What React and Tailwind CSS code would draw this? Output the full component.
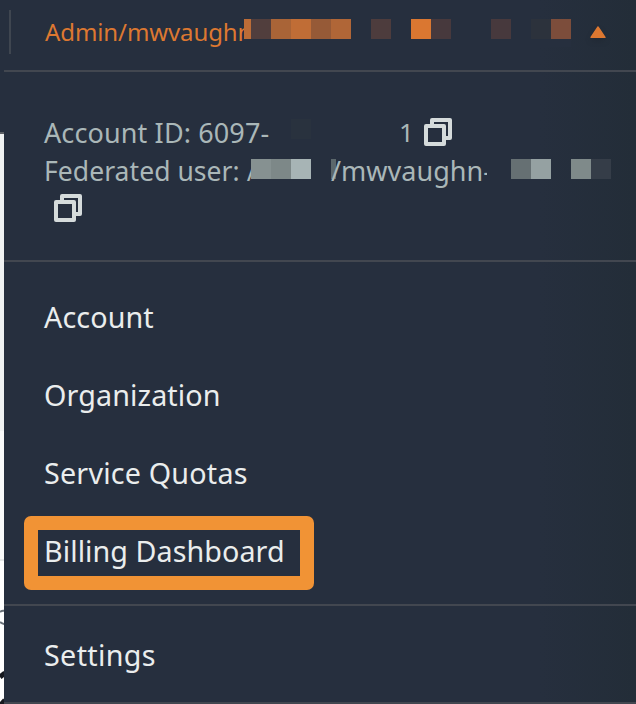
const headerBlocks = [
  [7, '#bc6c37'], [20, '#513e3d'], [20, '#a96437'], [20, '#c06d36'], [20, '#965a37'], [20, '#b06637'],
  [20, null], [20, '#4d3c3d'], [20, null], [20, '#da7731'], [20, '#47393d'], [40, null],
  [20, '#47393d'], [20, null], [20, '#2c323c'], [20, '#7c4d3b'],
];
const nameBlocks = [[20, '#869191'], [20, '#7d8888'], [20, '#a7b4b5'], [20, null], [5, '#5b676b']];
const tailBlocks = [[24, '#262f3e'], [20, '#667073'], [20, '#95a1a2'], [20, null], [20, '#7f8a8a'], [20, '#353d48']];

function Blocks({ items }) {
  return (
    <span className="flex h-5 shrink-0">
      {items.map(([width, color], i) => (
        <span key={i} className="h-5 shrink-0" style={{ width, backgroundColor: color || 'transparent' }} />
      ))}
    </span>
  );
}

function CopyIcon() {
  return (
    <svg className="size-7 shrink-0" viewBox="0 0 28 28" fill="none" stroke="#d5dbdb" strokeWidth="4" strokeLinejoin="round">
      <path d="M2 8h18v18H2z" />
      <path d="M8 8V2h18v18h-6" />
    </svg>
  );
}

const itemText = 'text-[28.7px] leading-[38px] whitespace-nowrap text-[#eaeded]';

export default function App() {
  return (
    <div className="flex h-[704px] w-[636px] flex-col overflow-hidden bg-[linear-gradient(to_right,#262f3e_540px,#232d38_636px)] font-['Noto_Sans',sans-serif]">
      <header className="flex h-[70px] shrink-0">
        <div className="mt-[10px] ml-[9px] h-11 w-0.5 bg-[#3f4650]" />
        <div className="mt-[13px] ml-[34px] w-[199px] text-[24px] leading-[38px] whitespace-nowrap text-[#dd7831]">
          <span className="tracking-[-0.1px]">Admin/mwvaughn</span>
        </div>
        <div className="mt-[19px] h-7 bg-[#262f3e]"><Blocks items={headerBlocks} /></div>
        <svg className="mt-[25px] ml-[19px] h-[14px] w-4 drop-shadow-md" viewBox="0 0 16 14">
          <path d="M8 2 15 12.3H1z" fill="#dd7831" stroke="#dd7831" strokeWidth="1.4" strokeLinejoin="round" />
        </svg>
      </header>
      <div className="flex min-h-0 grow">
        <aside className="relative h-full w-1 shrink-0 overflow-hidden">
          <div className="h-[62px]" />
          <div className="h-0.5 bg-[#5b5f64]" />
          <div className="h-[297px] bg-[#f0f2f2]" />
          <div className="h-[130px] border-b-2 border-[#e5e8e8] bg-[#f9fafa]" />
          <div className="h-[143px] bg-white" />
          <svg className="absolute top-[530px] left-0 h-[104px] w-1" viewBox="0 0 4 104" fill="none">
            <path d="M0 13Q2 11 5 12M0 23Q2 25 5 25" transform="translate(0 -1)" stroke="#687078" strokeWidth="2" />
            <path d="M0 77 5 73M0 106 5 100" stroke="#16191f" strokeWidth="5" />
          </svg>
        </aside>
        <main className="flex min-w-0 grow flex-col border-t-2 border-[#424750]">
          <section className="flex h-[190px] shrink-0 flex-col border-b-2 border-[#424750] pt-[42px] pl-10 text-[26px] leading-[38px] whitespace-nowrap text-[#aab7b8]">
            <div className="flex h-[38px]">
              <span className="w-[247px] text-[27px] tracking-[0.12px]">Account ID: 6097-</span>
              <span className="mt-[5px] size-5 bg-[#29323e]" />
              <span className="-mt-px ml-[88px] w-[25px]">1</span>
              <span className="mt-1"><CopyIcon /></span>
            </div>
            <div className="flex h-[38px]">
              <span className="w-[207px] text-[26.5px] tracking-[0.05px]">Federated user: /</span>
              <span className="mt-[7px]"><Blocks items={nameBlocks} /></span>
              <span className="-ml-[5px] w-[156px] text-[27px] tracking-[0.02px]">/mwvaughn-</span>
              <span className="mt-[7px]"><Blocks items={tailBlocks} /></span>
            </div>
            <div className="mt-1 ml-2.5"><CopyIcon /></div>
          </section>
          <nav className="flex h-[344px] shrink-0 flex-col border-b-2 border-[#424750] pt-9 pl-10">
            <div className={itemText}><span className="tracking-[0.1px]">Account</span></div>
            <div className={itemText + ' mt-10'}><span className="tracking-[0.12px]">Organization</span></div>
            <div className={itemText + ' mt-10'}><span className="tracking-[0.2px]">Service Quotas</span></div>
            <div className="mt-[24px] -ml-5 h-[74px] w-[290px] shrink-0 rounded-[7px] bg-[#f19335] p-[14px]">
              <div className="h-[46px] bg-[#262f3e] pt-0.5 pl-1.5">
                <div className={itemText}><span className="tracking-[0.06px]">Billing Dashboard</span></div>
              </div>
            </div>
          </nav>
          <div className="h-24 shrink-0 pt-[30px] pl-10">
            <div className={itemText}><span className="tracking-[0.35px]">Settings</span></div>
          </div>
          <div className="h-0.5 shrink-0 bg-[#424750]" />
        </main>
      </div>
    </div>
  );
}
